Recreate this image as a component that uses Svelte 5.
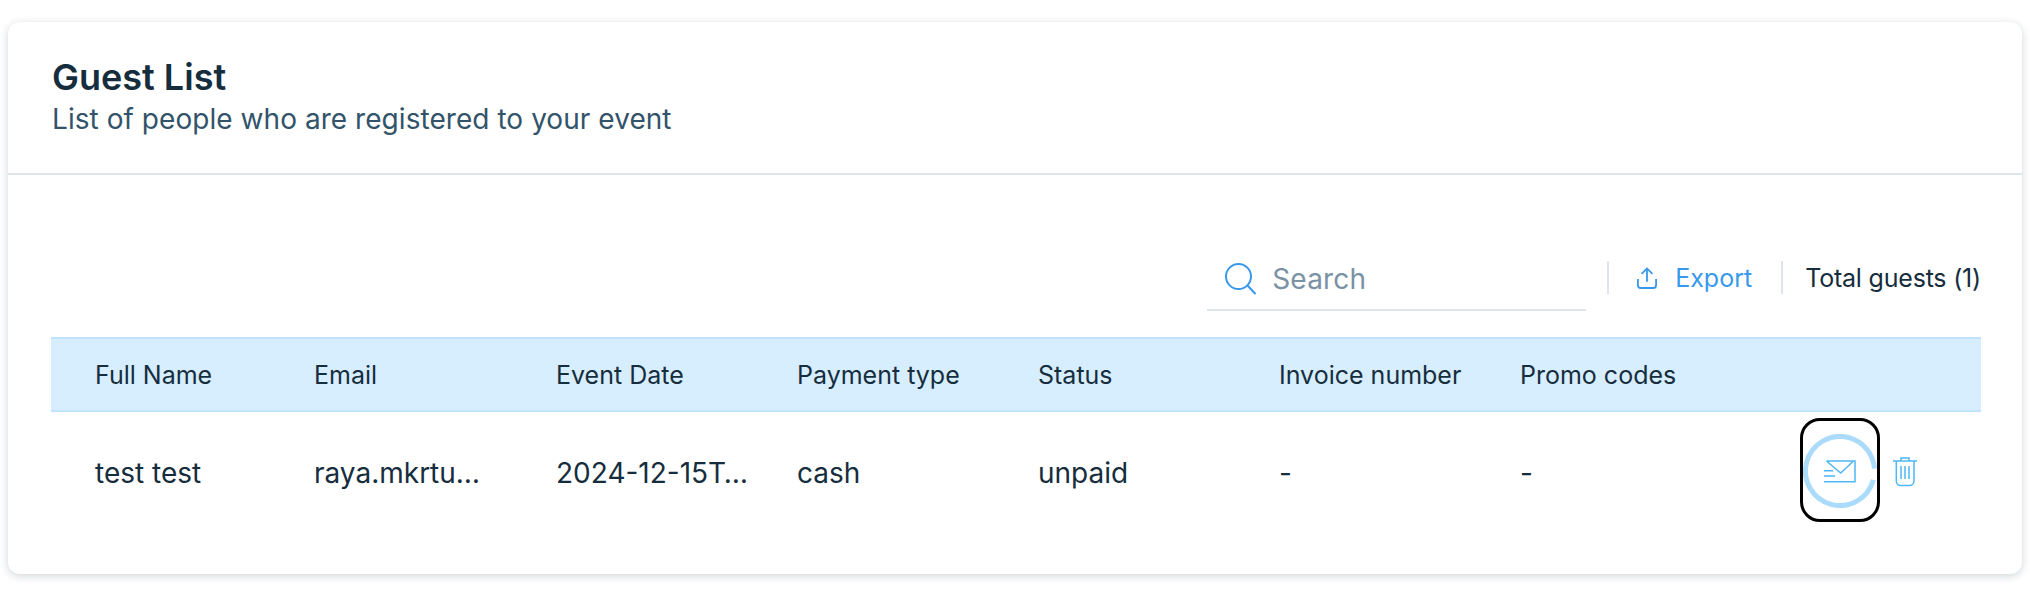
<script lang="ts">
const columns = ["Full Name", "Email", "Event Date", "Payment type", "Status", "Invoice number", "Promo codes"];
const row = ["test test", "raya.mkrtu…", "2024-12-15T…", "cash", "unpaid", "-", "-"];
</script>

<div class="page">
	<section class="card">
		<header class="head">
			<h1>Guest List</h1>
			<p>List of people who are registered to your event</p>
		</header>
		<div class="body">
			<div class="toolbar">
				<div class="search">
					<svg width="32" height="32" viewBox="0 0 32 32" fill="none" stroke="#3899ec" stroke-width="2">
						<circle cx="13.500" cy="13.500" r="12.500"></circle>
						<path d="M22.500 22.500l8 8.500"></path>
					</svg>
					<span>Search</span>
				</div>
				<div class="sep"></div>
				<div class="export">
					<svg width="20" height="22" viewBox="0 0 22 24" fill="none" stroke="#3899ec" stroke-width="2">
						<path d="M11 16V1.500M5 7.500l6-6 6 6M1 13v7a3 3 0 0 0 3 3h14a3 3 0 0 0 3-3v-7"></path>
					</svg>
					<span>Export</span>
				</div>
				<div class="sep"></div>
				<div class="total">Total guests (1)</div>
			</div>
			<div class="table">
				<div class="tr th">
					{#each columns as col}
						<div class="cell">{col}</div>
					{/each}
				</div>
				<div class="tr td">
					{#each row as value}
						<div class="cell">{value}</div>
					{/each}
					<div class="actions">
						<div class="focus">
							<svg class="ring" width="74" height="74" viewBox="0 0 74 74" fill="none">
								<circle cx="37" cy="37" r="34.500" stroke="#aadbfb" stroke-width="5" stroke-dasharray="205 12" transform="rotate(15 37 37)"></circle>
								<path d="M23.500 27H52v20.700H21M23.500 27l14.200 12L50 27.500M21 36.700h9M21 42h11" stroke="#4eb7f5" stroke-width="1.500"></path>
							</svg>
						</div>
						<svg class="trash" width="24" height="30" viewBox="0 0 24 30" fill="none" stroke="#4eb7f5" stroke-width="1.500">
							<path d="M0 4h24M8 4V1h8v3M3.300 4v20a4.500 4.500 0 0 0 4.500 4.500h8.700a4.500 4.500 0 0 0 4.500-4.500V4M8 9v13M12 9v13M16 9v13"></path>
						</svg>
					</div>
				</div>
			</div>
		</div>
	</section>
</div>

<style>
	:global(body) {
		margin: 0;
		background: #fff;
	}

	.page {
		width: 2030px;
		height: 594px;
		padding: 22px 8px 20px;
		box-sizing: border-box;
		font-family: "Inter", "Open Sans", sans-serif;
		color: #162d3d;
	}

	.card {
		height: 100%;
		background: #fff;
		border-radius: 12px;
		box-shadow: 0 2px 8px rgba(22, 45, 61, 0.2);
	}

	.head {
		height: 153px;
		box-sizing: border-box;
		padding: 33px 44px 0;
		border-bottom: 2px solid #dfe5eb;
	}

	h1 {
		margin: 0;
		font-size: 36px;
		line-height: 44px;
		font-weight: 600;
	}

	.head p {
		margin: 0;
		font-size: 28px;
		line-height: 40px;
		letter-spacing: 0.05px;
		color: #32536a;
	}

	.body {
		padding: 0 41px 0 43px;
	}

	.toolbar {
		display: flex;
		justify-content: flex-end;
		align-items: flex-start;
		height: 162px;
		box-sizing: border-box;
		padding-top: 86px;
	}

	.search {
		width: 379px;
		height: 50px;
		box-sizing: border-box;
		display: flex;
		align-items: center;
		gap: 15px;
		padding: 0 0 12px 18px;
		border-bottom: 2px solid #dfe5eb;
		font-size: 28px;
		letter-spacing: 0.2px;
		color: #7a92a5;
	}

	.sep {
		width: 2px;
		height: 33px;
		background: #dfe5eb;
	}

	.search + .sep {
		margin-left: 21px;
	}

	.export {
		display: flex;
		align-items: center;
		height: 33px;
		gap: 18px;
		padding: 0 29px 0 28px;
		font-size: 25px;
		color: #3899ec;
	}

	.total {
		display: flex;
		align-items: center;
		height: 33px;
		padding-left: 22px;
		font-size: 25px;
		letter-spacing: -0.2px;
		color: #162d3d;
	}

	.th {
		height: 75px;
		background: #d6eeff;
		border-top: 2px solid #c1e4fe;
		border-bottom: 2px solid #c1e4fe;
		font-size: 25px;
		box-sizing: border-box;
	}

	.td {
		height: 122px;
		font-size: 28px;
		position: relative;
	}

	.tr {
		display: grid;
		grid-template-columns: 219px 242px 241px 241px 241px 241px 241px;
		align-items: center;
	}

	.cell {
		padding-left: 44px;
	}

	.actions {
		position: absolute;
		left: 1749px;
		top: 6px;
		display: flex;
		align-items: center;
		gap: 13px;
	}

	.focus {
		width: 80px;
		height: 104px;
		box-sizing: border-box;
		border: 3px solid #000;
		border-radius: 20px;
		display: flex;
		align-items: center;
		justify-content: center;
	}

	.ring {
		flex: none;
		margin-top: 2px;
	}

	.trash {
		margin-top: 3px;
	}
</style>
